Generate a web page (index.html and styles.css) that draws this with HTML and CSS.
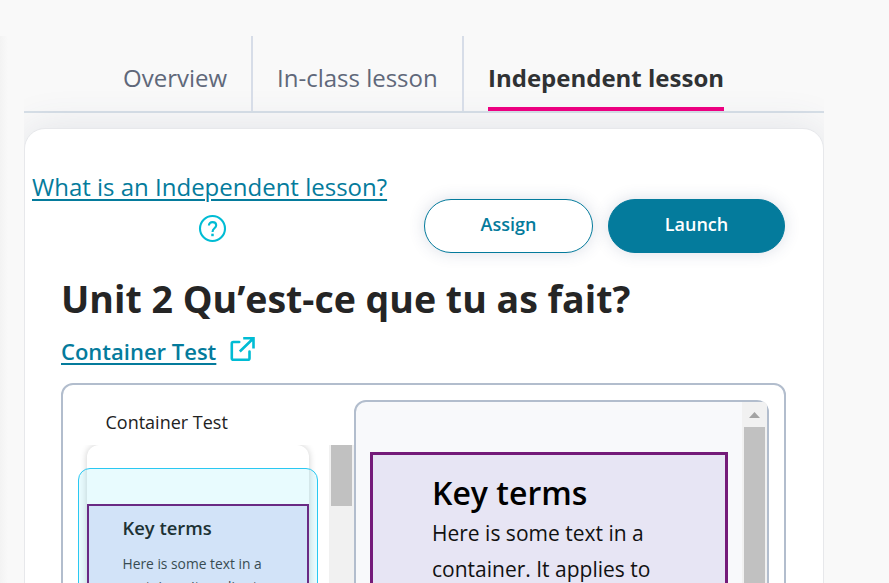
FILE: index.html
```html
<!DOCTYPE html>
<html lang="en">
<head>
<meta charset="utf-8">
<title>Independent lesson</title>
<link rel="stylesheet" href="styles.css">
</head>
<body>
<div class="page">
  <aside class="rail"></aside>
  <main class="lesson">
    <nav class="tabs">
      <a class="tab first"><span class="t-over">Overview</span></a>
      <a class="tab second"><span class="t-class">In-class lesson</span></a>
      <a class="tab active"><span class="t-ind">Independent lesson</span></a>
    </nav>
    <section class="card">
      <header class="toolbar">
        <div class="help">
          <a class="help-link">What is an Independent lesson?</a>
          <svg class="help-icon" viewBox="0 0 28 28" fill="none" stroke="#00bcd4" stroke-width="2.1"><circle cx="14.5" cy="14.5" r="12.5"/><path d="M10.9 11.5c0-2.2 1.5-3.4 3.6-3.4s3.7 1.2 3.7 3.2c0 3-3.6 2.9-3.6 6.1v.5"/><path d="M14.5 19.7v2.5" stroke-width="2.5"/></svg>
        </div>
        <button class="btn assign"><span>Assign</span></button>
        <button class="btn launch"><span>Launch</span></button>
      </header>
      <h1><span>Unit 2 Qu’est-ce que tu as fait?</span></h1>
      <div class="source">
        <a>Container Test</a>
        <svg class="ext" viewBox="0 0 26 26" fill="none" stroke="#00bcd4" stroke-width="2.6"><path d="M9.2 6H3.3Q1.8 6 1.8 7.5V22.2Q1.8 23.7 3.3 23.7H18Q19.5 23.7 19.5 22.2V15.5" stroke-linecap="round"/><path d="M13.2 2.2H23.5V12.5M23.5 2.2L9.8 15.5"/></svg>
      </div>
      <div class="viewer">
        <div class="outline">
          <div class="outline-title"><span>Container Test</span></div>
          <div class="thumbs">
            <div class="thumb-area">
              <div class="thumb">
                <div class="mini">
                  <h3>Key terms</h3>
                  <p>Here is some text in a<br>container. It applies to</p>
                </div>
              </div>
              <div class="selection"></div>
            </div>
            <div class="scroll left-scroll"><div class="thumb-bar"></div></div>
          </div>
        </div>
        <div class="preview">
          <div class="paper">
            <div class="terms">
              <h2><span>Key terms</span></h2>
              <p><span class="l1">Here is some text in a</span><br><span class="l2">container. It applies to</span></p>
            </div>
          </div>
          <div class="scroll right-scroll"><div class="arrow"></div><div class="thumb-bar"></div></div>
        </div>
      </div>
    </section>
  </main>
</div>
</body>
</html>
```

FILE: styles.css
```css
* { box-sizing: border-box; }
body { margin: 0; background: #f9f9f9; font-family: "Open Sans", sans-serif; color: #222; }
h1, h2, h3, p { margin: 0; }
.page { display: flex; height: 583px; overflow: hidden; }
.rail { width: 24px; margin-top: 36px; background: linear-gradient(90deg, #f3f3f3, #f9f9f9 8px); }
.lesson { width: 800px; padding-top: 36px; overflow: hidden; }
.tabs { display: flex; height: 77px; border-bottom: 2px solid #d7dfe7; }
.tab { padding: 24px 25px 0 0; font-size: 24px; line-height: 36px; color: #60687a; border-right: 2px solid #d7dde8; white-space: nowrap; }
.first { width: 229px; padding-left: 99px; }
.second { width: 211px; padding-left: 24px; }
.active { padding: 24px 0 0; margin-left: 24px; width: 236px; border-right: 0; border-bottom: 4px solid #ec0080; font-weight: 700; color: #303234; }
.card { height: 520px; margin-top: 15px; border: 1px solid #e7e8eb; border-radius: 21px; background: #fff; box-shadow: 0 0 40px rgba(60, 75, 115, .13); }
.toolbar { display: flex; height: 124px; padding-left: 7px; }
.help { width: 360px; margin-right: 32px; padding-top: 40px; }
.help-link { display: block; white-space: nowrap; font-size: 24px; line-height: 36px; color: #047b9c; text-decoration: underline; text-decoration-thickness: 2px; text-underline-offset: 3px; }
.help-icon { display: block; width: 28px; height: 28px; margin: 9px 0 0 166px; overflow: visible; }
.btn { height: 54px; margin-top: 70px; padding: 0 0 4px; border: 1px solid #047b9c; border-radius: 27px; font: 600 18px/26px "Open Sans", sans-serif; box-shadow: 0 0 16px rgba(45, 65, 115, .17); }
.assign { width: 169px; background: #fff; color: #047b9c; }
.launch { width: 177px; margin-left: 15px; background: #047b9c; color: #fff; }
h1 { margin: 16px 0 0 36px; font-size: 37.5px; line-height: 60px; white-space: nowrap; color: #252525; }
.source { display: flex; height: 54px; padding: 5px 0 0 36px; font-weight: 600; font-size: 22px; line-height: 34px; color: #047b9c; }
.source a { width: 155px; white-space: nowrap; text-decoration: underline; text-decoration-thickness: 2px; text-underline-offset: 3px; }
.ext { width: 26px; height: 26px; margin: 2px 0 0 14px; }
.viewer { display: flex; width: 725px; height: 300px; margin-left: 36px; border: 2px solid #b2bdcd; border-radius: 12px; }
.outline { width: 291px; }
.outline-title { height: 60px; padding: 21px 0 0 42.5px; font-size: 18px; line-height: 32px; }
.thumbs { display: flex; height: 220px; overflow: hidden; }
.thumb-area { position: relative; width: 266px; }
.thumb { height: 240px; width: 222px; margin-left: 24px; padding-top: 59px; background: #fff; border-radius: 12px; box-shadow: 0 0 7px rgba(0, 0, 0, .2); }
.mini { height: 180px; border: 2px solid #741a79; padding: 6px 0 0 33.5px; background: #e7e5f9; }
.mini h3 { font-size: 18.4px; line-height: 32px; font-weight: 600; }
.mini p { margin-top: 8px; font-size: 13.8px; line-height: 23px; color: #3e3e43; white-space: nowrap; }
.selection { position: absolute; left: 15px; top: 23px; width: 240px; height: 250px; border: 1px solid #2ac8f2; border-radius: 12px; background: rgba(0, 206, 240, .09); }
.scroll { background: #f1f1f1; }
.left-scroll { width: 25px; margin-left: auto; padding-left: 2px; margin-right: 0; }
.left-scroll .thumb-bar { width: 21px; height: 61px; background: #c1c1c1; }
.preview { display: flex; width: 415px; height: 300px; margin-top: 15px; border: 2px solid #b2bdcd; border-radius: 12px; background: #f8f9fb; }
.paper { width: 386px; padding: 50px 0 0 14px; }
.terms { width: 358px; height: 240px; border: 3px solid #741a79; padding: 14px 0 0 59px; background: #e7e5f4; white-space: nowrap; color: #000; }
h2 { font-size: 32px; line-height: 48px; font-weight: 600; }
.terms p { font-size: 21px; line-height: 36px; margin-top: -2px; color: #111; }
.right-scroll { width: 25px; padding-left: 2px; border-top-right-radius: 4px; }
.arrow { width: 11px; height: 6px; margin: 10px 0 9px 5px; background: #a3a3a3; clip-path: polygon(50% 0, 100% 100%, 0 100%); }
.right-scroll .thumb-bar { width: 21px; height: 250px; background: #c1c1c1; }
```
